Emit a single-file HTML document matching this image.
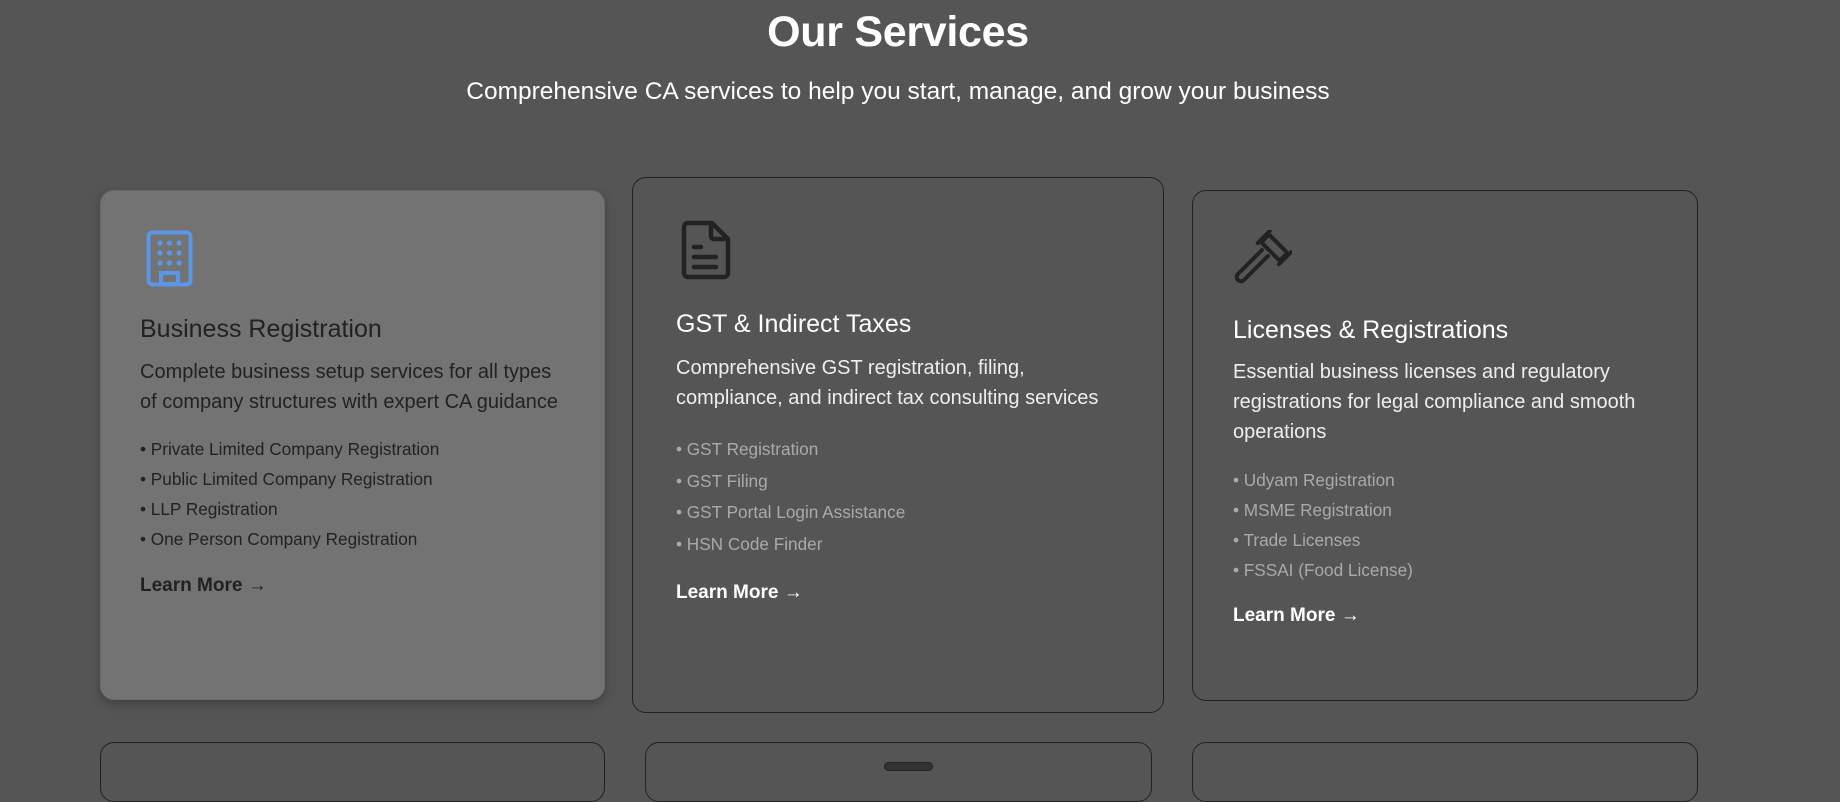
<!DOCTYPE html>
<html><head><meta charset="utf-8"><style>
*{margin:0;padding:0;box-sizing:border-box}
body{width:1840px;height:778px;overflow:hidden;background:#555555;font-family:"Liberation Sans",sans-serif;position:relative}
.a{position:absolute;white-space:nowrap}
h1{position:absolute;left:0;width:1796px;top:8px;text-align:center;color:#fff;font-size:43px;font-weight:bold;letter-spacing:-0.3px}
.sub{position:absolute;left:0;width:1796px;top:78px;text-align:center;color:#fff;font-size:24.5px}
.card{position:absolute;border-radius:14px;border:1px solid #222}
.t{font-size:25px}
.d{font-size:20px;line-height:30px}
.l{font-size:17.2px}
.lm{font-size:19px;font-weight:bold}
</style></head><body>
<h1>Our Services</h1>
<div class="sub">Comprehensive CA services to help you start, manage, and grow your business</div>

<div class="card" style="left:100px;top:190px;width:505px;height:510px;background:#737373;border-color:#6a6a6a;box-shadow:0 4px 10px rgba(0,0,0,0.25)"></div>
<div class="card" style="left:632px;top:177px;width:532px;height:536px;background:#555"></div>
<div class="card" style="left:1192px;top:190px;width:506px;height:511px;background:#555"></div>
<div class="card" style="left:100px;top:742px;width:505px;height:60px;background:#555"></div>
<div class="card" style="left:645px;top:742px;width:507px;height:60px;background:#555"></div>
<div class="card" style="left:1192px;top:742px;width:506px;height:60px;background:#555"></div>
<div class="a" style="left:884px;top:762px;width:49px;height:9px;border-radius:5px;background:#333;border:1px solid #222"></div>

<!-- card1 -->
<svg class="a" style="left:146px;top:230px" width="47" height="57" viewBox="0 0 47 57">
<rect x="2.5" y="2.5" width="42" height="52" rx="4" fill="none" stroke="#5b97e6" stroke-width="4"/>
<g fill="#5b97e6"><circle cx="14" cy="13" r="2.6"/><circle cx="23.5" cy="13" r="2.6"/><circle cx="33" cy="13" r="2.6"/><circle cx="14" cy="23" r="2.6"/><circle cx="23.5" cy="23" r="2.6"/><circle cx="33" cy="23" r="2.6"/><circle cx="14" cy="33" r="2.6"/><circle cx="23.5" cy="33" r="2.6"/><circle cx="33" cy="33" r="2.6"/></g>
<rect x="15" y="43" width="17" height="11" fill="none" stroke="#5b97e6" stroke-width="4"/>
</svg>
<div class="a t" style="left:140px;top:315px;color:#222">Business Registration</div>
<div class="a d" style="left:140px;top:357px;color:#222">Complete business setup services for all types<br>of company structures with expert CA guidance</div>
<div class="a l" style="left:140px;top:434px;color:#222;line-height:30px">• Private Limited Company Registration<br>• Public Limited Company Registration<br>• LLP Registration<br>• One Person Company Registration</div>
<div class="a lm" style="left:140px;top:575px;color:#222">Learn More →</div>

<!-- card2 -->
<svg class="a" style="left:680px;top:220px" width="52" height="60" viewBox="0 0 52 60">
<path d="M8 3H32L48 19V53a4 4 0 0 1-4 4H8a4 4 0 0 1-4-4V7a4 4 0 0 1 4-4Z" fill="none" stroke="#222" stroke-width="4.5" stroke-linejoin="round"/>
<path d="M31 4V16a3 3 0 0 0 3 3H47" fill="none" stroke="#222" stroke-width="4.5" stroke-linejoin="round"/>
<path d="M14 27H21M14 37H36M14 47H36" stroke="#222" stroke-width="4.5" stroke-linecap="round"/>
</svg>
<div class="a t" style="left:676px;top:310px;color:#fff">GST &amp; Indirect Taxes</div>
<div class="a d" style="left:676px;top:353px;color:#eee">Comprehensive GST registration, filing,<br>compliance, and indirect tax consulting services</div>
<div class="a l" style="left:676px;top:434px;color:#aaa;line-height:31.5px">• GST Registration<br>• GST Filing<br>• GST Portal Login Assistance<br>• HSN Code Finder</div>
<div class="a lm" style="left:676px;top:582px;color:#fff">Learn More →</div>

<!-- card3 -->
<svg class="a" style="left:1234px;top:230px" width="58" height="58" viewBox="0 0 58 58">
<g fill="none" stroke="#222" stroke-width="4" stroke-linejoin="round" stroke-linecap="round">
<g transform="rotate(45 40 18)">
<rect x="27" y="12" width="26" height="11" rx="1"/>
<path d="M25 9V26M55 9V26"/>
</g>
<path d="M34 26L10 50a4 4 0 0 1-6-6L28 20"/>
</g>
</svg>
<div class="a t" style="left:1233px;top:316px;color:#fff">Licenses &amp; Registrations</div>
<div class="a d" style="left:1233px;top:357px;color:#eee">Essential business licenses and regulatory<br>registrations for legal compliance and smooth<br>operations</div>
<div class="a l" style="left:1233px;top:465px;color:#aaa;line-height:30px">• Udyam Registration<br>• MSME Registration<br>• Trade Licenses<br>• FSSAI (Food License)</div>
<div class="a lm" style="left:1233px;top:605px;color:#fff">Learn More →</div>
</body></html>
